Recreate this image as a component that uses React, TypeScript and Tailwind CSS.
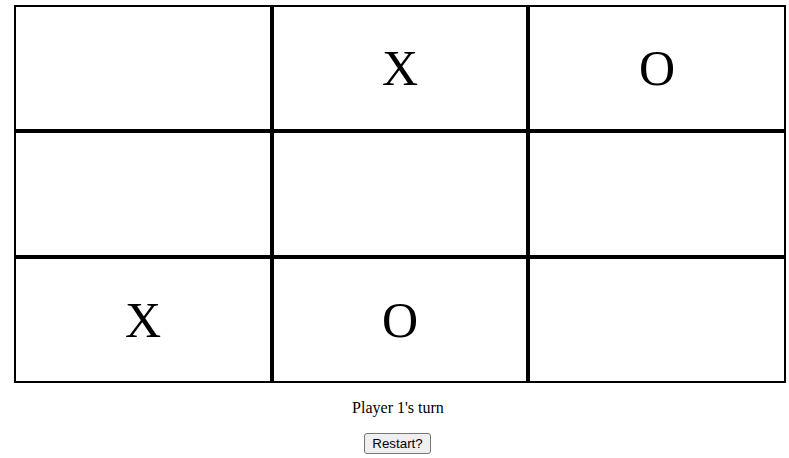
import React from "react";

const board: string[] = ["", "X", "O", "", "", "", "X", "O", ""];

export default function App() {
  return (
    <div className="w-[789px] h-[458px] bg-white text-black" style={{ fontFamily: '"Liberation Serif", "Times New Roman", serif' }}>
      <div className="pt-[5px] pl-[14px]">
        <div className="grid grid-cols-[258px_256px_258px] w-[772px]">
          {board.map((v, i) => (
            <div
              key={i}
              className="h-[126px] border-2 border-black flex items-center justify-center text-[50px] leading-none"
            >
              {v}
            </div>
          ))}
        </div>
      </div>
      <p className="mt-4 pl-[7px] text-center text-[16px] leading-[18px]">Player 1's turn</p>
      <div className="mt-4 pl-[6px] flex justify-center">
        <button
          className="bg-[#efefef] border border-[#767676] rounded-[3px] px-[7px] py-[1px] text-[13.333px] leading-[17px] text-black"
          style={{ fontFamily: '"Liberation Sans", Arial, sans-serif' }}
        >
          Restart?
        </button>
      </div>
    </div>
  );
}
